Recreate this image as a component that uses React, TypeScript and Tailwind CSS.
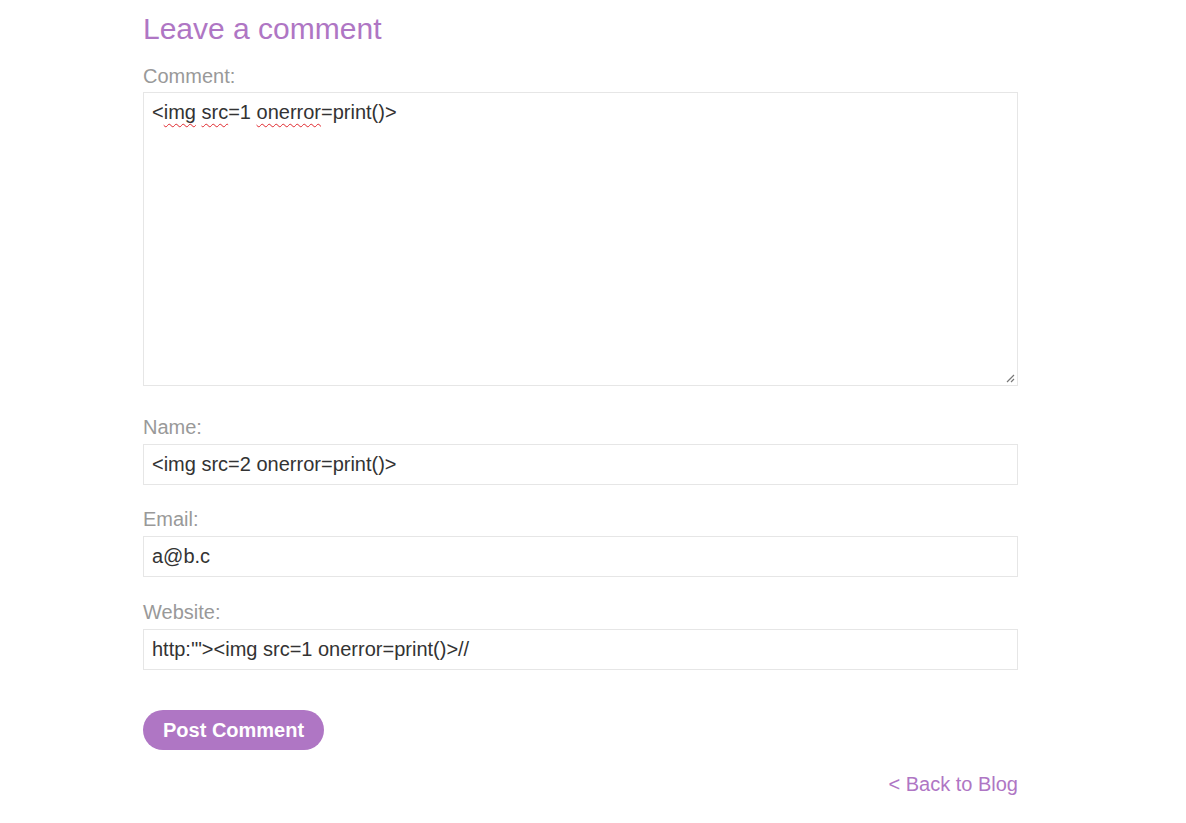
import React from 'react';

const purple = "text-[#af76c4]";

const Field = ({ label, value, top }: { label: string; value: string; top: string }) => (
  <div className={top}>
    <label className="block text-[20px] leading-[23px] text-[#999]">{label}</label>
    <div className="mt-[5px] h-[41px] w-full border border-[#e6e6e6] bg-white px-[8px] py-[8px] text-[20px] leading-[23px] text-[#333] whitespace-pre">
      {value}
    </div>
  </div>
);

// spell-check squiggle, as the browser draws it under unknown words
const Typo = ({ children }: { children: React.ReactNode }) => (
  <span className="underline decoration-wavy decoration-[#e0282d] decoration-1 underline-offset-[4px]">{children}</span>
);

export default function App() {
  return (
    <div className="min-h-[823px] bg-white" style={{ fontFamily: '"Liberation Sans", Arial, sans-serif' }}>
      <div className="ml-[143px] w-[875px] pt-[12px] pb-[20px]">
        <h1 className={`text-[30px] leading-[34px] font-normal ${purple}`}>Leave a comment</h1>

        <label className="mt-[19px] block text-[20px] leading-[23px] text-[#999]">Comment:</label>
        <div className="relative mt-[4px] h-[294px] w-full border border-[#e6e6e6] bg-white px-[8px] py-[8px] text-[20px] leading-[23px] text-[#333]">
          &lt;<Typo>img</Typo> <Typo>src</Typo>=1 <Typo>onerror</Typo>=print()&gt;
          <svg className="absolute right-[2px] bottom-[2px]" width="10" height="10" viewBox="0 0 10 10">
            <path d="M9 2 L2 9 M9 6 L6 9" stroke="#777" strokeWidth="1.2" />
          </svg>
        </div>

        <Field top="mt-[30px]" label="Name:" value="<img src=2 onerror=print()>" />
        <Field top="mt-[23px]" label="Email:" value="a@b.c" />
        <Field top="mt-[24px]" label="Website:" value={`http:'"><img src=1 onerror=print()>//`} />

        <button className="mt-[40px] h-[40px] rounded-full bg-[#af76c4] px-[20px] text-[20px] font-bold text-white">
          Post Comment
        </button>

        <div className="mt-[23px] flex justify-end">
          <a className={`text-[20px] leading-[23px] ${purple}`}>&lt; Back to Blog</a>
        </div>
      </div>
    </div>
  );
}
